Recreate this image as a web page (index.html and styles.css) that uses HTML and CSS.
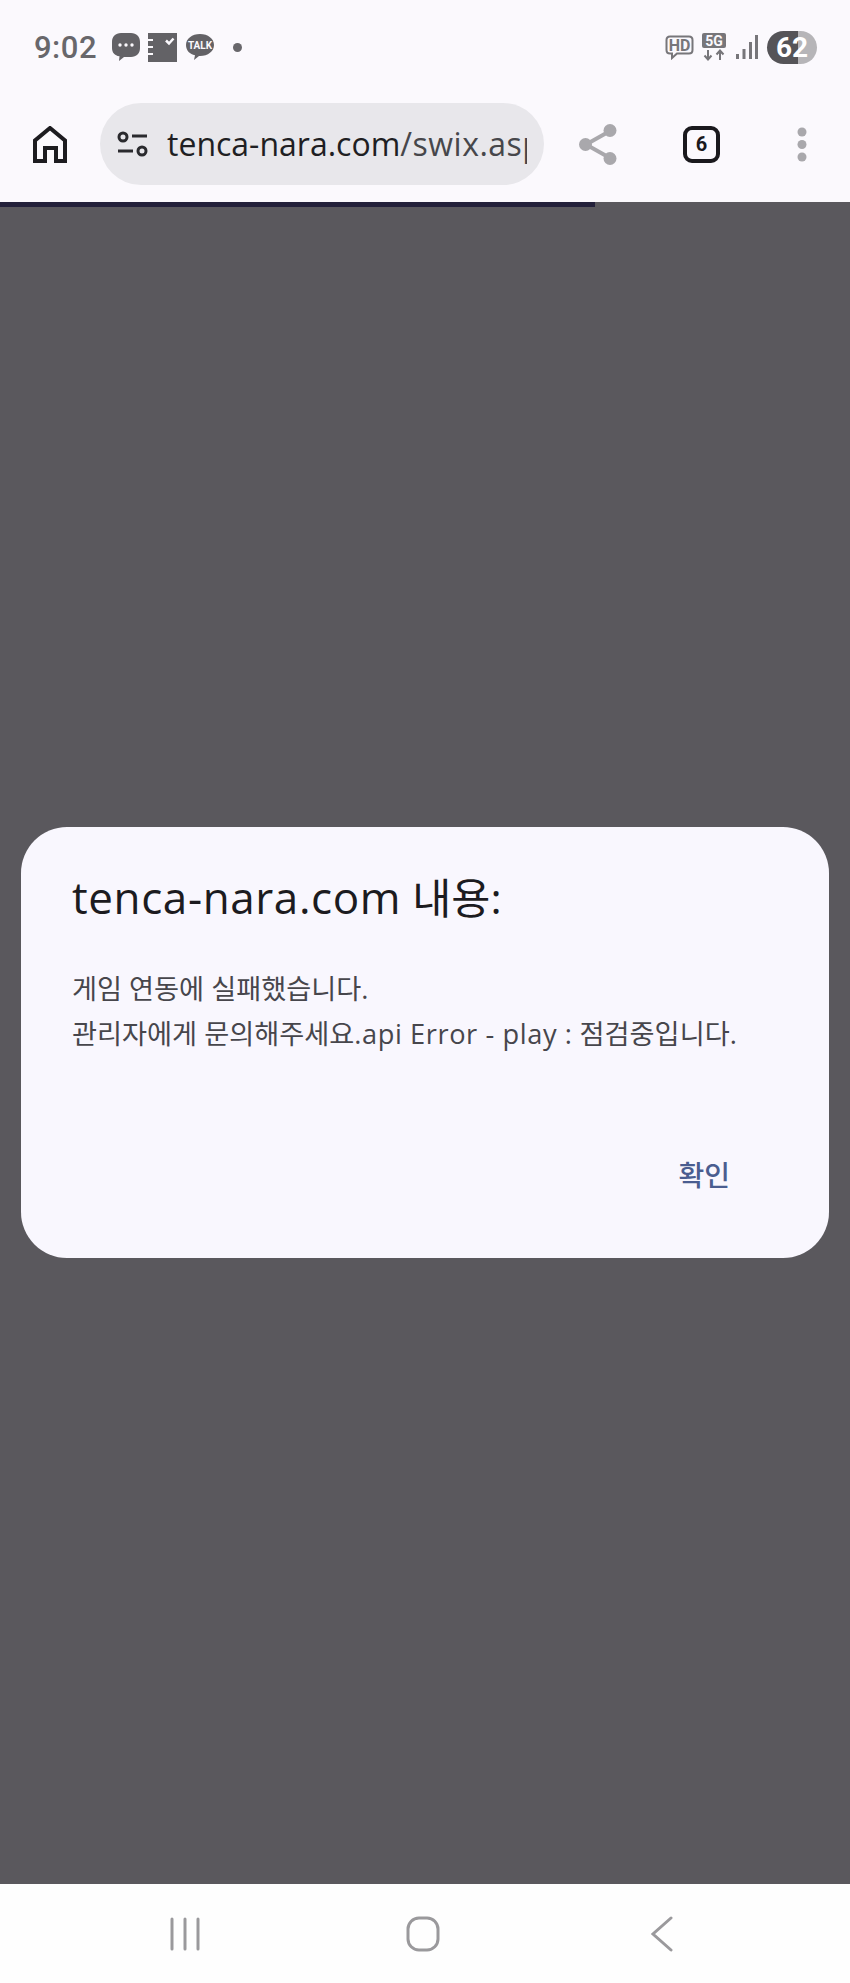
FILE: index.html
```html
<!DOCTYPE html>
<html lang="ko">
<head>
<meta charset="utf-8">
<title>tenca-nara.com</title>
<link rel="stylesheet" href="styles.css">
</head>
<body>
<div class="screen">
  <header class="status">
    <span class="time">9:02</span>
    <svg class="ic-msg" width="30" height="30" viewBox="0 0 30 30"><path class="fill" d="M10 1h10c5.500 0 9 3.500 9 9v6c0 5.500-3.500 9-9 9h-7l-5 4 .5-4.700C3.500 23.500 1 20.500 1 16v-6c0-5.500 3.500-9 9-9z"/><circle class="cut" cx="9" cy="13" r="1.700"/><circle class="cut" cx="15" cy="13" r="1.700"/><circle class="cut" cx="21" cy="13" r="1.700"/></svg>
    <svg class="ic-note" width="29" height="29" viewBox="0 0 29 29"><rect class="fill" width="29" height="29"/><path class="cut" d="M0 6h5v2H0zM0 13h5v2H0zM0 20h5v2H0z"/><path class="check" d="M18 7.500l3 3 4.500-5"/></svg>
    <svg class="ic-talk" width="30" height="28" viewBox="0 0 30 28"><path class="fill" d="M15 1c8 0 14 4.700 14 11s-6 11-14 11h-1l-5 4 1-4.800C5 21.500 1 17.500 1 12 1 5.700 7 1 15 1z"/><text class="talk-text" x="15" y="16">TALK</text></svg>
    <span class="dot"></span>
    <span class="spacer"></span>
    <svg class="ic-hd" width="29" height="25" viewBox="0 0 29 25"><path class="line" d="M5 1.500h19c2 0 3.500 1.500 3.500 3.500v10c0 2-1.500 3.500-3.500 3.500H12l-5 4.500v-4.500H5c-2 0-3.500-1.500-3.500-3.500V5c0-2 1.500-3.500 3.500-3.500z"/><text class="hd-text" x="14.500" y="15.500">HD</text></svg>
    <svg class="ic-5g" width="24" height="28" viewBox="0 0 24 28"><rect class="fill-mid" width="24" height="15" rx="2"/><text class="g-text" x="12" y="12.500">5G</text><path class="line-thin" d="M6 17v9M2.500 22.500L6 26.500l3.500-4M18 27v-9M14.500 21.500L18 17.500l3.500 4"/></svg>
    <svg class="ic-signal" width="22" height="24" viewBox="0 0 22 24"><path class="bars" d="M1.500 19v5M8 14v10M14.500 7v17M20.500 0v24"/></svg>
    <div class="battery"><span class="battery-num">62</span></div>
  </header>

  <nav class="toolbar">
    <svg class="ic-home" width="34" height="37" viewBox="0 0 34 37"><path class="home" d="M2 35V14.500L17 2l15 12.500V35h-9V22H12v13z"/></svg>
    <div class="omnibox">
      <svg class="ic-tune" width="31" height="26" viewBox="0 0 31 26"><circle class="tune" cx="6" cy="6" r="4"/><path class="tune" d="M15 5h15M1 20h15"/><circle class="tune" cx="25" cy="20" r="4"/></svg>
      <div class="url"><span class="domain">tenca-nara.com</span><span class="path">/swix.asp</span></div>
    </div>
    <svg class="ic-share" width="38" height="41" viewBox="0 0 38 41"><path class="share-line" d="M31 7L7 20.500 31 34"/><circle class="share-dot" cx="31" cy="6.500" r="6.500"/><circle class="share-dot" cx="6.500" cy="20.500" r="6.500"/><circle class="share-dot" cx="31" cy="34.500" r="6.500"/></svg>
    <div class="tabs">6</div>
    <svg class="ic-more" width="10" height="35" viewBox="0 0 10 35"><circle class="grey" cx="5" cy="5" r="4.500"/><circle class="grey" cx="5" cy="17.500" r="4.500"/><circle class="grey" cx="5" cy="30" r="4.500"/></svg>
  </nav>

  <main class="page">
    <div class="progress"></div>
    <section class="dialog">
      <h1 class="title"><span class="title-host">tenca-nara.com</span> 내용:</h1>
      <p class="message">게임 연동에 실패했습니다.<br>관리자에게 문의해주세요<span class="latin">.api Error - play :</span> 점검중입니다.</p>
      <div class="actions"><span class="ok">확인</span></div>
    </section>
  </main>

  <footer class="navbar">
    <svg class="nav-recent" width="30" height="34" viewBox="0 0 30 34"><path class="nav-line" d="M2 2v30M15 2v30M28 2v30"/></svg>
    <svg class="nav-home" width="34" height="36" viewBox="0 0 34 36"><rect class="nav-line" x="2" y="2" width="30" height="32" rx="11"/></svg>
    <svg class="nav-back" width="22" height="36" viewBox="0 0 22 36"><path class="nav-line" d="M20 2L2 18l18 16"/></svg>
  </footer>
</div>
</body>
</html>
```

FILE: styles.css
```css
* { box-sizing: border-box; }
html, body { margin: 0; padding: 0; }
body { width: 850px; height: 1983px; background: #fbf9fd; font-family: "Open Sans", "Noto Sans CJK KR", sans-serif; overflow: hidden; }
.screen { display: flex; flex-direction: column; height: 1983px; }

.status { display: flex; align-items: center; height: 103px; padding: 0 33px 9px 34px; flex: none; }
.time { font: 500 31px Roboto, sans-serif; color: #68676b; width: 63px; letter-spacing: .5px; }
.ic-msg { margin-left: 14px; }
.ic-note { margin-left: 7px; }
.ic-talk { margin-left: 8px; }
.dot { width: 9px; height: 9px; border-radius: 50%; background: #68676b; margin-left: 18px; }
.spacer { flex: 1; }
.fill { fill: #636266; }
.fill-mid { fill: #77767a; }
.cut { fill: #fbf9fd; }
.check { fill: none; stroke: #fbf9fd; stroke-width: 2.500; }
.talk-text { font: 700 10px Roboto, sans-serif; fill: #fbf9fd; text-anchor: middle; }
.line { fill: none; stroke: #77767a; stroke-width: 2; }
.line-thin { fill: none; stroke: #77767a; stroke-width: 2; }
.hd-text { font: 700 16px Roboto, sans-serif; fill: #77767a; text-anchor: middle; }
.g-text { font: 700 14px Roboto, sans-serif; fill: #fbf9fd; text-anchor: middle; }
.bars { fill: none; stroke: #77767a; stroke-width: 3; }
.ic-5g { margin-left: 8px; }
.ic-signal { margin-left: 10px; }
.battery { width: 50px; height: 33px; border-radius: 17px; margin-left: 9px; background: linear-gradient(90deg, #555458 0 62%, #b6b5b8 62% 100%); display: flex; align-items: center; justify-content: center; }
.battery-num { color: #fff; font: 700 28px Roboto, sans-serif; }

.toolbar { display: flex; align-items: center; height: 99px; padding: 0 0 17px 33px; flex: none; }
.home { fill: none; stroke: #1d1c20; stroke-width: 4; }
.omnibox { display: flex; align-items: center; width: 444px; height: 82px; margin-left: 33px; padding: 0 17px 0 17px; border-radius: 41px; background: #e8e7eb; }
.tune { fill: none; stroke: #2a2a2e; stroke-width: 3; }
.url { flex: 1; min-width: 0; margin-left: 19px; padding-bottom: 2px; overflow: hidden; white-space: nowrap; font-size: 32px; }
.domain { color: #1f1f23; }
.path { color: #47474b; letter-spacing: .5px; }
.ic-share { margin-left: 35px; }
.share-line { fill: none; stroke: #a9a8ac; stroke-width: 4; }
.share-dot, .grey { fill: #a9a8ac; }
.tabs { width: 37px; height: 37px; margin-left: 66px; border: 4px solid #1a191d; border-radius: 9px; display: flex; align-items: center; justify-content: center; font: 700 20px Roboto, sans-serif; color: #1a191d; }
.ic-more { margin-left: 77px; }

.page { position: relative; flex: 1; display: flex; align-items: center; padding: 0 21px; background: #5a585d; }
.progress { position: absolute; left: 0; top: 0; width: 595px; height: 5px; background: #23203a; }
.dialog { width: 808px; height: 431px; margin-bottom: 1px; padding: 42px 51px 0; border-radius: 46px; background: #f9f7fe; display: flex; flex-direction: column; }
.title { margin: 0; font-size: 42.5px; font-weight: 400; line-height: 56px; color: #1c1b20; }
.title-host { font-size: 44px; letter-spacing: .6px; }
.message { margin: 40px 0 0; font-size: 27.2px; line-height: 45px; color: #47464c; }
.latin { letter-spacing: .6px; }
.actions { display: flex; justify-content: flex-end; margin-top: 101px; padding-right: 48px; }
.ok { font-size: 28px; font-weight: 500; line-height: 36px; color: #4a5d90; }

.navbar { display: flex; align-items: center; height: 99px; padding-left: 170px; flex: none; background: #fefefe; }
.nav-home { margin-left: 206px; }
.nav-back { margin-left: 211px; }
.nav-line { fill: none; stroke: #9a999c; stroke-width: 3; stroke-linecap: round; }
```
